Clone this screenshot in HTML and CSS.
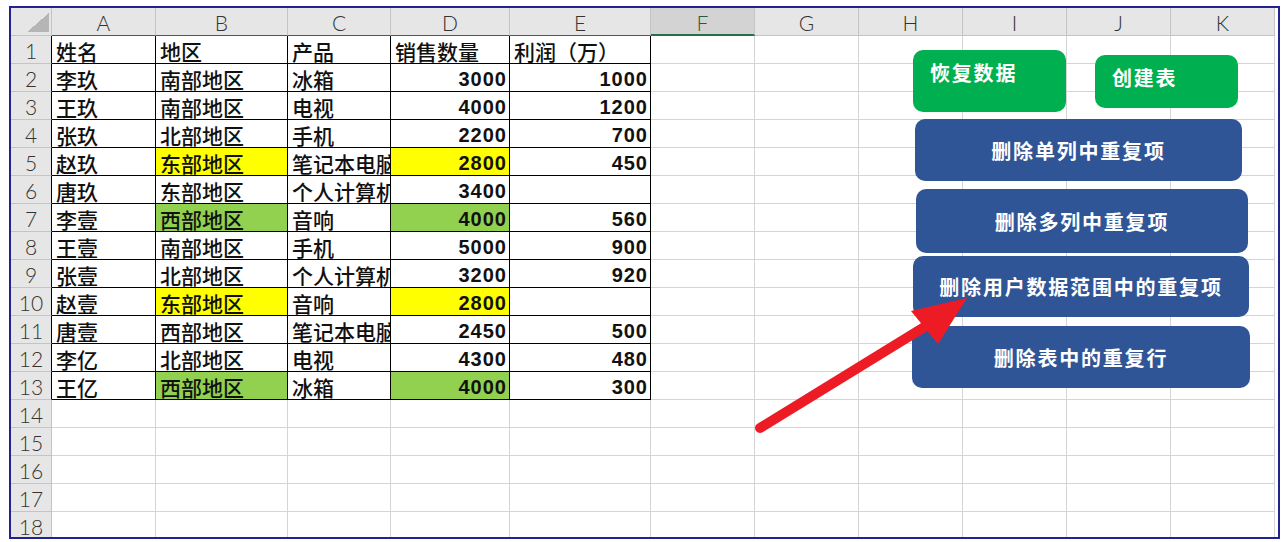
FILE: index.html
```html
<!DOCTYPE html>
<html lang="zh-CN">
<head>
<meta charset="utf-8">
<title>删除重复项</title>
<link rel="stylesheet" href="styles.css">
</head>
<body>
<div class="frame">
  <div class="sheet">
    <div class="ch corner"></div><div class="ch b">A</div><div class="ch b">B</div><div class="ch b">C</div><div class="ch b">D</div><div class="ch b">E</div><div class="ch sel">F</div><div class="ch">G</div><div class="ch">H</div><div class="ch">I</div><div class="ch">J</div><div class="ch">K</div>

    <div class="rh b">1</div><div class="d">姓名</div><div class="d">地区</div><div class="d">产品</div><div class="d">销售数量</div><div class="d">利润（万）</div><div class="c"></div><div class="c"></div><div class="c"></div><div class="c"></div><div class="c"></div><div class="c"></div>
    <div class="rh b">2</div><div class="d">李玖</div><div class="d">南部地区</div><div class="d">冰箱</div><div class="d n">3000</div><div class="d n">1000</div><div class="c"></div><div class="c"></div><div class="c"></div><div class="c"></div><div class="c"></div><div class="c"></div>
    <div class="rh b">3</div><div class="d">王玖</div><div class="d">南部地区</div><div class="d">电视</div><div class="d n">4000</div><div class="d n">1200</div><div class="c"></div><div class="c"></div><div class="c"></div><div class="c"></div><div class="c"></div><div class="c"></div>
    <div class="rh b">4</div><div class="d">张玖</div><div class="d">北部地区</div><div class="d">手机</div><div class="d n">2200</div><div class="d n">700</div><div class="c"></div><div class="c"></div><div class="c"></div><div class="c"></div><div class="c"></div><div class="c"></div>
    <div class="rh b">5</div><div class="d">赵玖</div><div class="d y">东部地区</div><div class="d clip">笔记本电脑</div><div class="d n y">2800</div><div class="d n">450</div><div class="c"></div><div class="c"></div><div class="c"></div><div class="c"></div><div class="c"></div><div class="c"></div>
    <div class="rh b">6</div><div class="d">唐玖</div><div class="d">东部地区</div><div class="d clip">个人计算机</div><div class="d n">3400</div><div class="d n"></div><div class="c"></div><div class="c"></div><div class="c"></div><div class="c"></div><div class="c"></div><div class="c"></div>
    <div class="rh b">7</div><div class="d">李壹</div><div class="d g">西部地区</div><div class="d">音响</div><div class="d n g">4000</div><div class="d n">560</div><div class="c"></div><div class="c"></div><div class="c"></div><div class="c"></div><div class="c"></div><div class="c"></div>
    <div class="rh b">8</div><div class="d">王壹</div><div class="d">南部地区</div><div class="d">手机</div><div class="d n">5000</div><div class="d n">900</div><div class="c"></div><div class="c"></div><div class="c"></div><div class="c"></div><div class="c"></div><div class="c"></div>
    <div class="rh b">9</div><div class="d">张壹</div><div class="d">北部地区</div><div class="d clip">个人计算机</div><div class="d n">3200</div><div class="d n">920</div><div class="c"></div><div class="c"></div><div class="c"></div><div class="c"></div><div class="c"></div><div class="c"></div>
    <div class="rh b">10</div><div class="d">赵壹</div><div class="d y">东部地区</div><div class="d">音响</div><div class="d n y">2800</div><div class="d n"></div><div class="c"></div><div class="c"></div><div class="c"></div><div class="c"></div><div class="c"></div><div class="c"></div>
    <div class="rh b">11</div><div class="d">唐壹</div><div class="d">西部地区</div><div class="d clip">笔记本电脑</div><div class="d n">2450</div><div class="d n">500</div><div class="c"></div><div class="c"></div><div class="c"></div><div class="c"></div><div class="c"></div><div class="c"></div>
    <div class="rh b">12</div><div class="d">李亿</div><div class="d">北部地区</div><div class="d">电视</div><div class="d n">4300</div><div class="d n">480</div><div class="c"></div><div class="c"></div><div class="c"></div><div class="c"></div><div class="c"></div><div class="c"></div>
    <div class="rh b">13</div><div class="d">王亿</div><div class="d g">西部地区</div><div class="d">冰箱</div><div class="d n g">4000</div><div class="d n">300</div><div class="c"></div><div class="c"></div><div class="c"></div><div class="c"></div><div class="c"></div><div class="c"></div>
    <div class="rh">14</div><div class="c"></div><div class="c"></div><div class="c"></div><div class="c"></div><div class="c"></div><div class="c"></div><div class="c"></div><div class="c"></div><div class="c"></div><div class="c"></div><div class="c"></div>
    <div class="rh">15</div><div class="c"></div><div class="c"></div><div class="c"></div><div class="c"></div><div class="c"></div><div class="c"></div><div class="c"></div><div class="c"></div><div class="c"></div><div class="c"></div><div class="c"></div>
    <div class="rh">16</div><div class="c"></div><div class="c"></div><div class="c"></div><div class="c"></div><div class="c"></div><div class="c"></div><div class="c"></div><div class="c"></div><div class="c"></div><div class="c"></div><div class="c"></div>
    <div class="rh">17</div><div class="c"></div><div class="c"></div><div class="c"></div><div class="c"></div><div class="c"></div><div class="c"></div><div class="c"></div><div class="c"></div><div class="c"></div><div class="c"></div><div class="c"></div>
    <div class="rh">18</div><div class="c"></div><div class="c"></div><div class="c"></div><div class="c"></div><div class="c"></div><div class="c"></div><div class="c"></div><div class="c"></div><div class="c"></div><div class="c"></div><div class="c"></div>
  </div>

  <div class="btn green restore">恢复数据</div>
  <div class="btn green create">创建表</div>
  <div class="btn blue b1">删除单列中重复项</div>
  <div class="btn blue b2">删除多列中重复项</div>
  <div class="btn blue b3">删除用户数据范围中的重复项</div>
  <div class="btn blue b4">删除表中的重复行</div>

  <svg class="arrow" width="1267" height="529" viewBox="0 0 1267 529">
    <line x1="749" y1="420" x2="915" y2="318" stroke="#ED1C24" stroke-width="10" stroke-linecap="round"/>
    <polygon points="956,290 900,303 927,336" fill="#ED1C24"/>
  </svg>
</div>
</body>
</html>
```

FILE: styles.css
```css
html, body {
  margin: 0;
  padding: 0;
  background: #ffffff;
}

.frame {
  position: relative;
  margin: 6px 0 0 9px;
  width: 1267px;
  height: 529px;
  border: 2px solid #23238f;
  overflow: hidden;
  background: #ffffff;
}

.sheet {
  display: grid;
  grid-template-columns: 41px 104px 132px 103px 119px 141px 104px 104px 104px 104px 104px 104px;
  grid-auto-rows: 28px;
}

.sheet > div {
  box-sizing: border-box;
  white-space: nowrap;
}

.ch {
  background: #e6e6e6;
  border-right: 1px solid #c4c4c4;
  border-bottom: 1px solid #c4c4c4;
  font-family: Lato, "Open Sans", "Liberation Sans", sans-serif;
  font-weight: 300;
  font-size: 21px;
  color: #333333;
  text-align: center;
  padding-top: 3px;
  line-height: 24px;
}

.ch.b {
  border-bottom-color: #555555;
}

.ch.sel {
  background: #d3d3d3;
  border-bottom: 2px solid #217346;
  color: #1f5e3c;
}

.corner {
  background-color: #e6e6e6;
  background-image: linear-gradient(to bottom right, transparent 50%, #b5b5b5 50%);
  background-size: 22px 19px;
  background-position: right 2px bottom 3px;
  background-repeat: no-repeat;
}

.rh {
  background: #e6e6e6;
  border-right: 1px solid #c4c4c4;
  border-bottom: 1px solid #c4c4c4;
  font-family: Lato, "Open Sans", "Liberation Sans", sans-serif;
  font-weight: 300;
  font-size: 21px;
  color: #333333;
  text-align: center;
  padding-top: 3px;
  line-height: 24px;
}

.rh.b {
  border-right-color: #000000;
}

.c {
  border-right: 1px solid #d4d4d4;
  border-bottom: 1px solid #d4d4d4;
}

.d {
  border-right: 1px solid #000000;
  border-bottom: 1px solid #000000;
  font-family: "Noto Sans CJK SC", "Liberation Sans", sans-serif;
  font-weight: 500;
  font-size: 21px;
  color: #111111;
  padding: 4px 0 0 4px;
  line-height: 22px;
}

.d.clip {
  overflow: clip visible;
}

.d.n {
  font-family: "Liberation Sans", Arial, sans-serif;
  font-weight: 700;
  font-size: 20px;
  letter-spacing: 1px;
  text-align: right;
  padding: 3px 2px 0 0;
  line-height: 24px;
}

.y {
  background: #ffff00;
}

.g {
  background: #92d050;
}

.btn {
  position: absolute;
  box-sizing: border-box;
  color: #ffffff;
  font-family: "Noto Sans CJK SC", "Liberation Sans", sans-serif;
  font-weight: 700;
  font-size: 20px;
  letter-spacing: 1.8px;
  white-space: nowrap;
  border-radius: 10px;
}

.green {
  background: #00b050;
  padding-left: 17px;
  line-height: 24px;
}

.blue {
  background: #2f5597;
  display: flex;
  align-items: center;
  justify-content: center;
}

.restore {
  left: 902px;
  top: 42px;
  width: 153px;
  height: 62px;
  padding-top: 11px;
}

.create {
  left: 1084px;
  top: 47px;
  width: 143px;
  height: 53px;
  padding-top: 11px;
}

.b1 { left: 904px; top: 111px; width: 327px; height: 62px; }
.b2 { left: 905px; top: 181px; width: 332px; height: 64px; }
.b3 { left: 902px; top: 248px; width: 336px; height: 61px; }
.b4 { left: 901px; top: 318px; width: 338px; height: 62px; }

.arrow {
  position: absolute;
  left: 0;
  top: 0;
  pointer-events: none;
}
```
